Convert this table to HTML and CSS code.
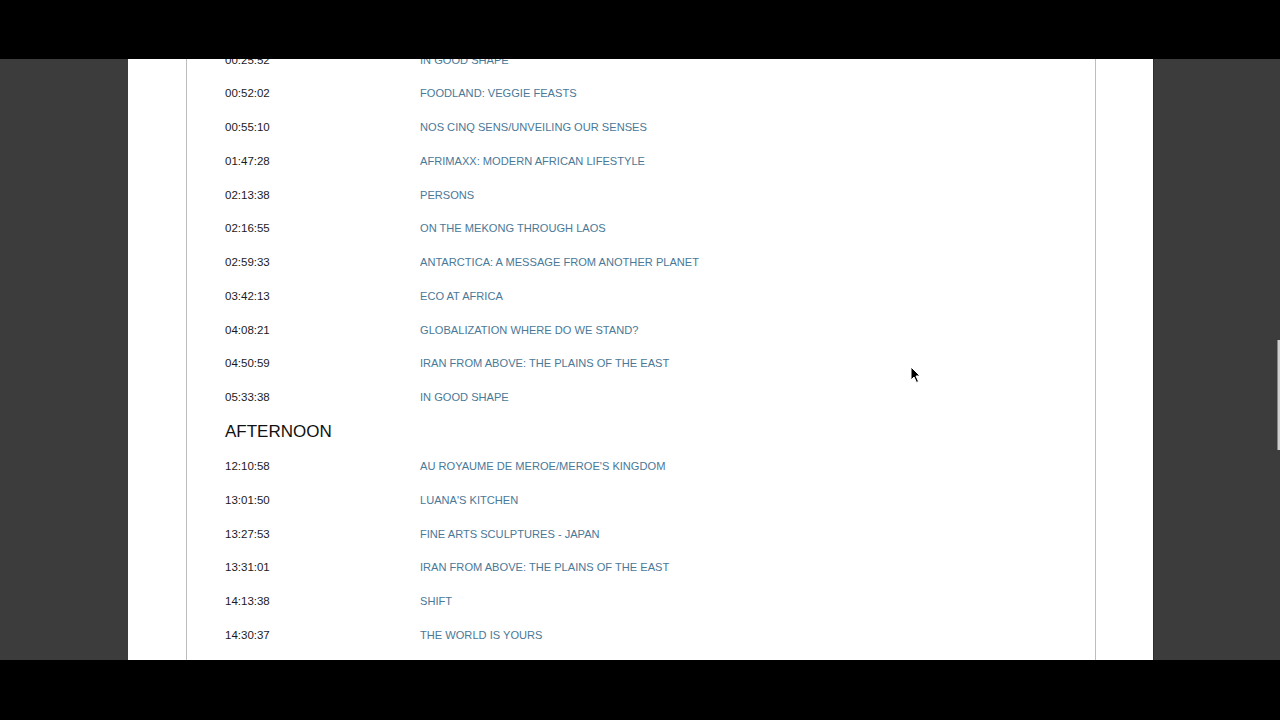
FILE: index.html
```html
<!DOCTYPE html>
<html>
<head>
<meta charset="utf-8">
<link rel="stylesheet" href="styles.css">
</head>
<body>
<div class="screen">
  <div class="bar-top"></div>
  <div class="frame">
    <div class="page">
      <div class="box">
        <div class="list">
          <div class="row"><span class="time">00:25:52</span><a class="title">IN GOOD SHAPE</a></div>
          <div class="row"><span class="time">00:52:02</span><a class="title">FOODLAND: VEGGIE FEASTS</a></div>
          <div class="row"><span class="time">00:55:10</span><a class="title">NOS CINQ SENS/UNVEILING OUR SENSES</a></div>
          <div class="row"><span class="time">01:47:28</span><a class="title">AFRIMAXX: MODERN AFRICAN LIFESTYLE</a></div>
          <div class="row"><span class="time">02:13:38</span><a class="title">PERSONS</a></div>
          <div class="row"><span class="time">02:16:55</span><a class="title">ON THE MEKONG THROUGH LAOS</a></div>
          <div class="row"><span class="time">02:59:33</span><a class="title">ANTARCTICA: A MESSAGE FROM ANOTHER PLANET</a></div>
          <div class="row"><span class="time">03:42:13</span><a class="title">ECO AT AFRICA</a></div>
          <div class="row"><span class="time">04:08:21</span><a class="title">GLOBALIZATION WHERE DO WE STAND?</a></div>
          <div class="row"><span class="time">04:50:59</span><a class="title">IRAN FROM ABOVE: THE PLAINS OF THE EAST</a></div>
          <div class="row"><span class="time">05:33:38</span><a class="title">IN GOOD SHAPE</a></div>
          <h2 class="heading">AFTERNOON</h2>
          <div class="row"><span class="time">12:10:58</span><a class="title">AU ROYAUME DE MEROE/MEROE'S KINGDOM</a></div>
          <div class="row"><span class="time">13:01:50</span><a class="title">LUANA'S KITCHEN</a></div>
          <div class="row"><span class="time">13:27:53</span><a class="title">FINE ARTS SCULPTURES - JAPAN</a></div>
          <div class="row"><span class="time">13:31:01</span><a class="title">IRAN FROM ABOVE: THE PLAINS OF THE EAST</a></div>
          <div class="row"><span class="time">14:13:38</span><a class="title">SHIFT</a></div>
          <div class="row"><span class="time">14:30:37</span><a class="title">THE WORLD IS YOURS</a></div>
        </div>
      </div>
    </div>
    <div class="scroll-thumb"></div>
    <svg class="cursor" width="12" height="18" viewBox="0 0 12 18">
      <path d="M1 1 L1 14 L4 11 L6.5 16.5 L8.5 15.5 L6 10 L10 10 Z" fill="#000" stroke="#fff" stroke-width="1"/>
    </svg>
  </div>
  <div class="bar-bottom"></div>
</div>
</body>
</html>
```

FILE: styles.css
```css
html, body {
  margin: 0;
  padding: 0;
  background: #000;
}
.screen {
  width: 1280px;
  height: 720px;
  display: flex;
  flex-direction: column;
  overflow: hidden;
}
.bar-top {
  height: 59px;
  background: #000;
  flex: none;
}
.bar-bottom {
  height: 60px;
  background: #000;
  flex: none;
}
.frame {
  position: relative;
  height: 601px;
  flex: none;
  background: #3c3c3c;
  overflow: hidden;
  display: flex;
  justify-content: flex-start;
  padding-left: 128px;
}
.page {
  width: 1026px;
  height: 100%;
  background: #fff;
  border-right: 1px solid #2e2e2e;
  padding-left: 58px;
  box-sizing: border-box;
}
.box {
  width: 910px;
  height: 100%;
  box-sizing: border-box;
  border-left: 1px solid #bdbdbd;
  border-right: 1px solid #bdbdbd;
  padding-left: 38px;
  overflow: hidden;
}
.list {
  margin-top: -16.3px;
  font-family: "Liberation Sans", Arial, sans-serif;
}
.row {
  height: 33.75px;
  display: flex;
  align-items: center;
}
.time {
  width: 195px;
  color: #1a1a1a;
  font-size: 11.5px;
  flex: none;
}
.title {
  color: #4a7897;
  font-size: 11.1px;
  text-decoration: none;
}
.heading {
  margin: 0;
  height: 35.25px;
  display: flex;
  align-items: center;
  padding-top: 1px;
  box-sizing: border-box;
  font-family: "Liberation Sans", Arial, sans-serif;
  font-weight: normal;
  font-size: 17px;
  color: #111;
}
.scroll-thumb {
  position: absolute;
  right: 0;
  top: 281px;
  width: 2px;
  height: 110px;
  background: #cfcfcf;
  border-left: 1px solid #888;
}
.cursor {
  position: absolute;
  left: 910px;
  top: 307px;
}
```
